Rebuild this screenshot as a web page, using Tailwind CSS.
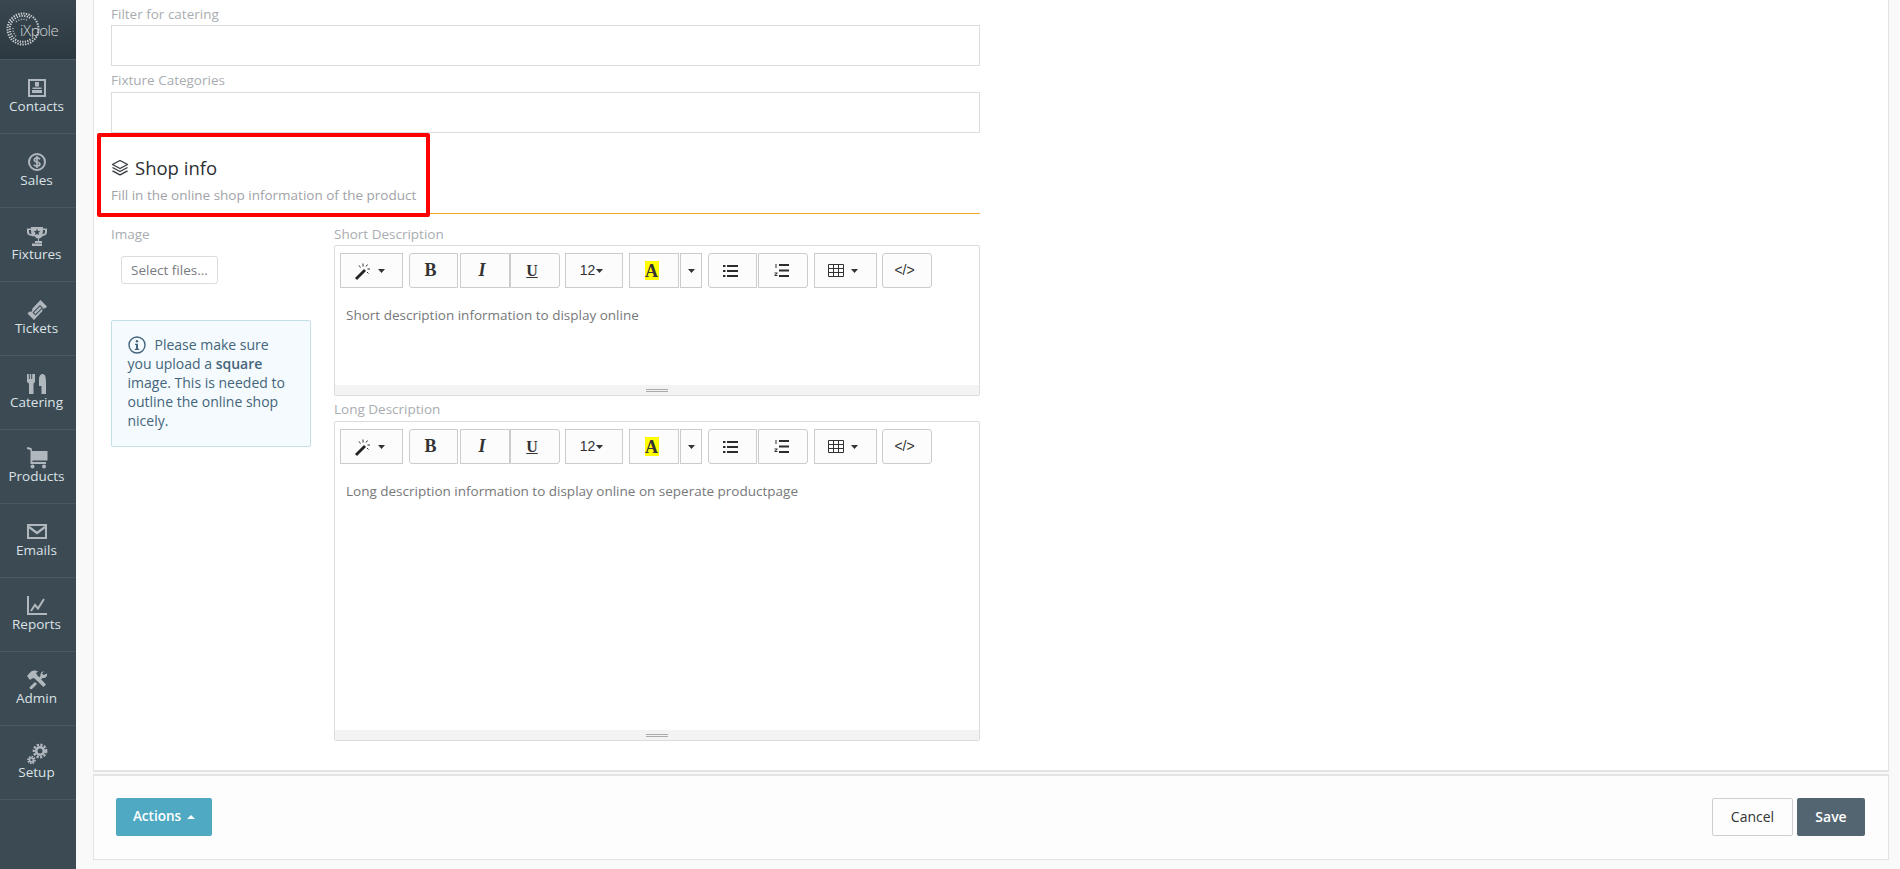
<!doctype html>
<html lang="en">
<head>
<meta charset="utf-8">
<title>Shop info</title>
<script src="https://cdn.jsdelivr.net/npm/@tailwindcss/browser@4"></script>
</head>
<body class="bg-[#f9f9f9] font-['Open_Sans',sans-serif] text-[13.5px] overflow-hidden">
<div class="relative flex h-[869px] w-[1900px] overflow-hidden">

  <!-- Sidebar -->
  <nav class="w-[76px] h-full shrink-0 bg-[#3c4a54] text-[#dbe2e6] text-[13.5px] leading-5">
    <div class="h-[60px] bg-gradient-to-b from-[#3a4750] to-[#2d3940] border-b border-[#4a5862]">
      <div class="relative w-[60px] h-[60px]">
        <svg class="absolute left-[6px] top-[12px]" width="34" height="34" viewBox="0 0 34 34" fill="none">
          <circle cx="17" cy="17" r="15.500" stroke="#c9ced1" stroke-width="2" stroke-dasharray="1.400 1.200"/>
          <path d="M24 6A13 13 0 1 0 25 27" stroke="#d4d8da" stroke-width="2" stroke-dasharray="1.200 1.300"/>
          <path d="M21 8A10.500 10.500 0 0 0 9 11M7 16a10.500 10.500 0 0 0 4 9" stroke="#aeb5b9" stroke-width="1.500" stroke-dasharray="1.100 1.500"/>
        </svg>
        <span class="absolute left-[20px] top-[20px] text-[15px] leading-5 tracking-[-0.4px] font-light text-[#d5dadd]">iXpole</span>
      </div>
    </div>
    <a class="h-[74px] border-b border-[#4a5862] flex flex-col items-center pt-[17px] pr-[3px]">
      <svg width="22" height="22" viewBox="0 0 22 22" fill="#b0b8bd"><path fill-rule="evenodd" d="M2 2h18v18H2zM4 4v14h14V4z"/><path d="M9 5h4v4.500H9zM6.500 10.500h9V12h-9zM6 13h10v3H6z"/></svg>
      <span class="-mt-[3px]">Contacts</span>
    </a>
    <a class="h-[74px] border-b border-[#4a5862] flex flex-col items-center pt-[17px] pr-[3px]">
      <svg width="22" height="22" viewBox="0 0 22 22" fill="none" stroke="#b0b8bd"><circle cx="11" cy="11" r="8" stroke-width="2"/><path stroke-width="1.700" d="M14 8.300c-.6-1-1.600-1.400-3-1.400-1.600 0-2.700.8-2.700 2 0 2.800 5.600 1.400 5.600 4.200 0 1.300-1.200 2-3 2-1.400 0-2.500-.5-3.100-1.500M11 5v12"/></svg>
      <span class="-mt-[3px]">Sales</span>
    </a>
    <a class="h-[74px] border-b border-[#4a5862] flex flex-col items-center pt-[17px] pr-[3px]">
      <svg width="22" height="22" viewBox="0 0 22 22" fill="#b0b8bd"><path fill-rule="evenodd" d="M5 2h12v1.500h4V7c0 2.500-2 4-4.600 4.300-.8 1.200-2 2-3.400 2.300V16h3v2H9v-2h3v-2.400c-1.400-.3-2.600-1.100-3.400-2.300C3 11 1 9.500 1 7V3.500h4zM3 5v2c0 1.200.9 2 2.500 2.300C5.200 8 5 6.500 5 5zM17 5c0 1.500-.2 3-.5 4.300C18.100 9 19 8.200 19 7V5z"/><path fill="#3c4a54" d="M11 3.800l1 2.100 2.300.3-1.700 1.600.4 2.300-2-1.100-2 1.100.4-2.300-1.700-1.600 2.300-.3z"/><path d="M6 18.500h10V21H6z"/></svg>
      <span class="-mt-[3px]">Fixtures</span>
    </a>
    <a class="h-[74px] border-b border-[#4a5862] flex flex-col items-center pt-[17px] pr-[3px]">
      <svg width="22" height="22" viewBox="0 0 22 22" fill="#b0b8bd"><path fill-rule="evenodd" d="M14.500 1l6.500 6.500-2 2a1.800 1.800 0 0 0-2.500 2.500L8 21l-6.500-6.500 2-2A1.800 1.800 0 0 0 6 10zM14 6l-7.500 7.500 3 3L17 9z"/><path d="M14 7.500l1.500 1.500-6 6L8 13.500z"/></svg>
      <span class="-mt-[3px]">Tickets</span>
    </a>
    <a class="h-[74px] border-b border-[#4a5862] flex flex-col items-center pt-[17px] pr-[3px]">
      <svg width="22" height="22" viewBox="0 0 22 22" fill="#b0b8bd"><path d="M1 1h1.800v5h1V1h1.400v5h1V1H9v8l-1.500 1.500V21H3V10.500L1 9zM16.500 1c2.700 0 3.500 3 3.500 9v11h-4.500v-8H13V6c0-3 1.500-5 3.500-5z"/></svg>
      <span class="-mt-[3px]">Catering</span>
    </a>
    <a class="h-[74px] border-b border-[#4a5862] flex flex-col items-center pt-[17px] pr-[3px]">
      <svg width="22" height="22" viewBox="0 0 22 22" fill="#b0b8bd"><path d="M1 0l4.500 1L6 4h15.500v9.500H6.500V15H20v2H4.500V3L1 2z"/><circle cx="6.500" cy="19.500" r="2"/><circle cx="18" cy="19.500" r="2"/></svg>
      <span class="-mt-[3px]">Products</span>
    </a>
    <a class="h-[74px] border-b border-[#4a5862] flex flex-col items-center pt-[17px] pr-[3px]">
      <svg width="22" height="22" viewBox="0 0 22 22" fill="none"><rect x="2" y="4" width="18" height="13" stroke="#b0b8bd" stroke-width="2"/><path d="M3 6l8 6 8-6" stroke="#b0b8bd" stroke-width="2.200"/></svg>
      <span class="-mt-[3px]">Emails</span>
    </a>
    <a class="h-[74px] border-b border-[#4a5862] flex flex-col items-center pt-[17px] pr-[3px]">
      <svg width="22" height="22" viewBox="0 0 22 22" fill="none" stroke="#b0b8bd"><path stroke-width="2" d="M2 1v18h19"/><path stroke-width="2" d="M5 16l4-6 3 3.500L18 4"/></svg>
      <span class="-mt-[3px]">Reports</span>
    </a>
    <a class="h-[74px] border-b border-[#4a5862] flex flex-col items-center pt-[17px] pr-[3px]">
      <svg width="22" height="22" viewBox="0 0 22 22" fill="#b0b8bd"><path d="M1 7l4-4.500c2.500-1.500 5-1.500 7 0L10 4l1 2 9 9.500-2.500 2.500L8 9 6 9.500 4 11z"/><path d="M21 4.500c.5 2-.5 4-2.500 4.500L16.500 9 13 12.500l-2-2 3.500-3.500c-.4-2.400.8-4.500 3.500-5l-2 2.500 1.500 1.500zM9 13l2 2-5 5c-1.500.8-3-.5-2.200-2z"/></svg>
      <span class="-mt-[3px]">Admin</span>
    </a>
    <a class="h-[74px] border-b border-[#4a5862] flex flex-col items-center pt-[17px] pr-[3px]">
      <svg width="22" height="22" viewBox="0 0 22 22" fill="none" stroke="#b0b8bd"><circle cx="14" cy="8" r="6.200" stroke-width="2.400" stroke-dasharray="2.200 1.400"/><circle cx="14" cy="8" r="3.800" stroke-width="2.600"/><circle cx="5.500" cy="17" r="3.400" stroke-width="1.800" stroke-dasharray="1.600 1"/><circle cx="5.500" cy="17" r="2" stroke-width="1.700"/></svg>
      <span class="-mt-[3px]">Setup</span>
    </a>
  </nav>

  <!-- Main -->
  <main class="w-[1796px] ml-[17px] shrink-0 flex flex-col h-full">
    <section class="h-[772px] bg-white border-x border-b-2 border-[#e3e3e3] pl-[17px] pr-[908px]">
      <label class="block h-[25px] text-[#a9adb1] leading-[28px]">Filter for catering</label>
      <div class="h-[41px] border border-[#dcdcdc] bg-white"></div>
      <label class="block h-[26px] text-[#a9adb1] leading-[29px]">Fixture Categories</label>
      <div class="h-[41px] border border-[#dcdcdc] bg-white"></div>

      <div class="h-[81px] border-b border-[#f0a92a] pt-[25px]">
        <h2 class="flex items-center gap-[6px] h-5 text-[18.5px] leading-5 text-[#2c2f33]">
          <svg width="18" height="18" viewBox="0 0 17 18" fill="none" stroke="#33373b" stroke-width="1.400" stroke-linejoin="round"><path d="M8.500 1.500L16 5.500l-7.500 4-7.500-4z"/><path d="M1 8.500l7.500 4 7.500-4"/><path d="M1 11.800l7.500 4 7.500-4"/></svg>
          Shop info
        </h2>
        <p class="mt-[7px] leading-5 text-[#9fa3a7]">Fill in the online shop information of the product</p>
      </div>

      <div class="flex mt-[8px]">
        <div class="w-[200px] shrink-0">
          <label class="block h-[23px] leading-[24px] text-[#a9adb1]">Image</label>
          <button class="block ml-[10px] mt-[11px] w-[97px] h-[28px] border border-[#dcdcdc] rounded-[3px] bg-white text-[13.5px] text-[#777b7f]">Select files...</button>
          <div class="mt-[36px] h-[127px] border border-[#c4dfe7] rounded-[2px] bg-[#f4fafd] pl-[15.5px] pr-[18px] pt-[14px] text-[14px] leading-[19px] text-[#44657b]">
            <svg class="inline-block align-[-4px] mr-[9px]" width="18" height="18" viewBox="0 0 18 18" fill="none"><circle cx="9" cy="9" r="8" stroke="#44657b" stroke-width="1.400"/><circle cx="9" cy="5.200" r="1.200" fill="#44657b"/><path d="M7 7.800h3v5h1.200V14H6.800v-1.200H8V9H7z" fill="#44657b"/></svg>Please make sure you upload a <strong class="font-semibold">square</strong> image. This is needed to outline the online shop nicely.
          </div>
        </div>
        <div class="ml-[23px] w-[646px] shrink-0">
          <label class="block h-[23px] leading-[24px] text-[#a9adb1]">Short Description</label>
          <div class="h-[151px] border border-[#dcdcdc] rounded-[2px] flex flex-col">
            <div class="flex pt-[7px] pl-[5px] h-[42px] shrink-0 text-[#333]">
              <button class="w-[63px] h-[35px] border border-[#ccc] bg-[#fcfcfc] flex items-center justify-center gap-[6px] pr-[4px]"><svg width="18" height="18" viewBox="0 0 18 18"><path d="M1 16l9-9 2 2-9 9z" fill="#222"/><path d="M9 1.500v3M13.500 2.500l-1.500 2M16 7h-2.500M14.500 11.500l-1.500-1.500M5 3.500l1.500 2" stroke="#333" stroke-width="1"/></svg><svg width="7" height="4" viewBox="0 0 7 4"><path d="M0 0h7L3.500 4z" fill="#333"/></svg></button>
              <button class="ml-[6px] w-[49px] h-[35px] border border-[#ccc] bg-[#fcfcfc] rounded-l-[3px] pr-[6px] font-['Liberation_Serif',serif] font-bold text-[18px]">B</button>
              <button class="ml-[2px] w-[50px] h-[35px] border border-[#ccc] bg-[#fcfcfc] pr-[6px] font-['Liberation_Serif',serif] font-bold italic text-[18px]">I</button>
              <button class="w-[50px] h-[35px] border border-[#ccc] bg-[#fcfcfc] rounded-r-[3px] pr-[6px] font-['Liberation_Serif',serif] font-bold underline text-[16px]">U</button>
              <button class="ml-[5px] w-[58px] h-[35px] border border-[#ccc] bg-[#fcfcfc] flex items-center justify-center gap-[1px] pr-[5px] font-['Liberation_Sans',sans-serif] text-[14px]">12<svg width="7" height="4" viewBox="0 0 7 4"><path d="M0 0h7L3.500 4z" fill="#333"/></svg></button>
              <button class="ml-[6px] w-[50px] h-[35px] border border-[#ccc] bg-[#fcfcfc] flex items-center justify-center pr-[5px]"><span class="w-[14px] h-[19px] bg-[#ffff00] flex items-center justify-center font-['Liberation_Serif',serif] font-bold text-[18px] leading-none">A</span></button>
              <button class="ml-[1px] w-[22px] h-[35px] border border-[#ccc] bg-[#fcfcfc] flex items-center justify-center"><svg width="7" height="4" viewBox="0 0 7 4"><path d="M0 0h7L3.500 4z" fill="#333"/></svg></button>
              <button class="ml-[6px] w-[49px] h-[35px] border border-[#ccc] bg-[#fcfcfc] rounded-l-[3px] flex items-center justify-center pr-[5px]"><svg width="15" height="12" viewBox="0 0 15 12" fill="#2c2c2c"><path d="M0 0h2.500v2H0zM4 0h11v2H4zM0 5h2.500v2H0zM4 5h11v2H4zM0 10h2.500v2H0zM4 10h11v2H4z"/></svg></button>
              <button class="ml-[1px] w-[50px] h-[35px] border border-[#ccc] bg-[#fcfcfc] rounded-r-[3px] flex items-center justify-center pr-[3px]"><svg width="15" height="13" viewBox="0 0 15 13" fill="#2c2c2c"><path d="M5 0h10v2H5zM5 5.500h10v2H5zM5 11h10v2H5zM1.500 0h1v4h-1zM.5 8.500h3v1l-2 1.500h2v1h-3v-1l2-1.500h-2z"/></svg></button>
              <button class="ml-[6px] w-[63px] h-[35px] border border-[#ccc] bg-[#fcfcfc] flex items-center justify-center gap-[7px] pr-[6px]"><svg width="16" height="13" viewBox="0 0 16 13" fill="none" stroke="#333"><path d="M.5.500h15v12H.500zM.5 4.500h15M.5 8.500h15M5.500.500v12M10.500.500v12"/></svg><svg width="7" height="4" viewBox="0 0 7 4"><path d="M0 0h7L3.500 4z" fill="#333"/></svg></button>
              <button class="ml-[5px] w-[50px] h-[35px] border border-[#ccc] bg-[#fcfcfc] rounded-[3px] pr-[5px] font-['Liberation_Sans',sans-serif] text-[14px]">&lt;/&gt;</button>
            </div>
            <p class="flex-1 pl-[11px] pt-[17px] leading-5 text-[#76787a]">Short description information to display online</p>
            <div class="h-[10px] bg-[#f3f3f3] flex flex-col items-center justify-center gap-[1px]"><i class="block w-[22px] h-px bg-[#aaa]"></i><i class="block w-[22px] h-px bg-[#aaa]"></i></div>
          </div>
          <label class="block h-[25px] leading-[27px] text-[#a9adb1]">Long Description</label>
          <div class="h-[320px] border border-[#dcdcdc] rounded-[2px] flex flex-col">
            <div class="flex pt-[7px] pl-[5px] h-[42px] shrink-0 text-[#333]">
              <button class="w-[63px] h-[35px] border border-[#ccc] bg-[#fcfcfc] flex items-center justify-center gap-[6px] pr-[4px]"><svg width="18" height="18" viewBox="0 0 18 18"><path d="M1 16l9-9 2 2-9 9z" fill="#222"/><path d="M9 1.500v3M13.500 2.500l-1.500 2M16 7h-2.500M14.500 11.500l-1.500-1.500M5 3.500l1.500 2" stroke="#333" stroke-width="1"/></svg><svg width="7" height="4" viewBox="0 0 7 4"><path d="M0 0h7L3.500 4z" fill="#333"/></svg></button>
              <button class="ml-[6px] w-[49px] h-[35px] border border-[#ccc] bg-[#fcfcfc] rounded-l-[3px] pr-[6px] font-['Liberation_Serif',serif] font-bold text-[18px]">B</button>
              <button class="ml-[2px] w-[50px] h-[35px] border border-[#ccc] bg-[#fcfcfc] pr-[6px] font-['Liberation_Serif',serif] font-bold italic text-[18px]">I</button>
              <button class="w-[50px] h-[35px] border border-[#ccc] bg-[#fcfcfc] rounded-r-[3px] pr-[6px] font-['Liberation_Serif',serif] font-bold underline text-[16px]">U</button>
              <button class="ml-[5px] w-[58px] h-[35px] border border-[#ccc] bg-[#fcfcfc] flex items-center justify-center gap-[1px] pr-[5px] font-['Liberation_Sans',sans-serif] text-[14px]">12<svg width="7" height="4" viewBox="0 0 7 4"><path d="M0 0h7L3.500 4z" fill="#333"/></svg></button>
              <button class="ml-[6px] w-[50px] h-[35px] border border-[#ccc] bg-[#fcfcfc] flex items-center justify-center pr-[5px]"><span class="w-[14px] h-[19px] bg-[#ffff00] flex items-center justify-center font-['Liberation_Serif',serif] font-bold text-[18px] leading-none">A</span></button>
              <button class="ml-[1px] w-[22px] h-[35px] border border-[#ccc] bg-[#fcfcfc] flex items-center justify-center"><svg width="7" height="4" viewBox="0 0 7 4"><path d="M0 0h7L3.500 4z" fill="#333"/></svg></button>
              <button class="ml-[6px] w-[49px] h-[35px] border border-[#ccc] bg-[#fcfcfc] rounded-l-[3px] flex items-center justify-center pr-[5px]"><svg width="15" height="12" viewBox="0 0 15 12" fill="#2c2c2c"><path d="M0 0h2.500v2H0zM4 0h11v2H4zM0 5h2.500v2H0zM4 5h11v2H4zM0 10h2.500v2H0zM4 10h11v2H4z"/></svg></button>
              <button class="ml-[1px] w-[50px] h-[35px] border border-[#ccc] bg-[#fcfcfc] rounded-r-[3px] flex items-center justify-center pr-[3px]"><svg width="15" height="13" viewBox="0 0 15 13" fill="#2c2c2c"><path d="M5 0h10v2H5zM5 5.500h10v2H5zM5 11h10v2H5zM1.500 0h1v4h-1zM.5 8.500h3v1l-2 1.500h2v1h-3v-1l2-1.500h-2z"/></svg></button>
              <button class="ml-[6px] w-[63px] h-[35px] border border-[#ccc] bg-[#fcfcfc] flex items-center justify-center gap-[7px] pr-[6px]"><svg width="16" height="13" viewBox="0 0 16 13" fill="none" stroke="#333"><path d="M.5.500h15v12H.500zM.5 4.500h15M.5 8.500h15M5.500.500v12M10.500.500v12"/></svg><svg width="7" height="4" viewBox="0 0 7 4"><path d="M0 0h7L3.500 4z" fill="#333"/></svg></button>
              <button class="ml-[5px] w-[50px] h-[35px] border border-[#ccc] bg-[#fcfcfc] rounded-[3px] pr-[5px] font-['Liberation_Sans',sans-serif] text-[14px]">&lt;/&gt;</button>
            </div>
            <p class="flex-1 pl-[11px] pt-[17px] leading-5 text-[#76787a]">Long description information to display online on seperate productpage</p>
            <div class="h-[10px] bg-[#f3f3f3] flex flex-col items-center justify-center gap-[1px]"><i class="block w-[22px] h-px bg-[#aaa]"></i><i class="block w-[22px] h-px bg-[#aaa]"></i></div>
          </div>
        </div>
      </div>
    </section>

    <footer class="mt-[2px] h-[86px] bg-[#fdfdfd] border-x border-b border-t-2 border-[#e3e3e3] flex items-center justify-between pl-[22px] pr-[23px] pb-[2px]">
      <button class="w-[96px] h-[38px] rounded-[2px] bg-[#4fa9c2] text-white text-[13.5px] font-semibold flex items-center justify-center gap-[6px]">Actions<svg width="8" height="4" viewBox="0 0 8 4"><path d="M0 4h8L4 0z" fill="#fff"/></svg></button>
      <div class="flex gap-[4px]">
        <button class="w-[81px] h-[38px] rounded-[2px] border border-[#cfcfcf] bg-[#fdfdfd] text-[14px] text-[#333]">Cancel</button>
        <button class="w-[68px] h-[38px] rounded-[2px] bg-[#536571] text-white text-[14px] font-semibold">Save</button>
      </div>
    </footer>
  </main>

  <!-- Annotation overlay -->
  <div class="absolute left-[97px] top-[133px] w-[333px] h-[84px] border-4 border-[#ff0000] rounded-[2px]"></div>
</div>
</body>
</html>
